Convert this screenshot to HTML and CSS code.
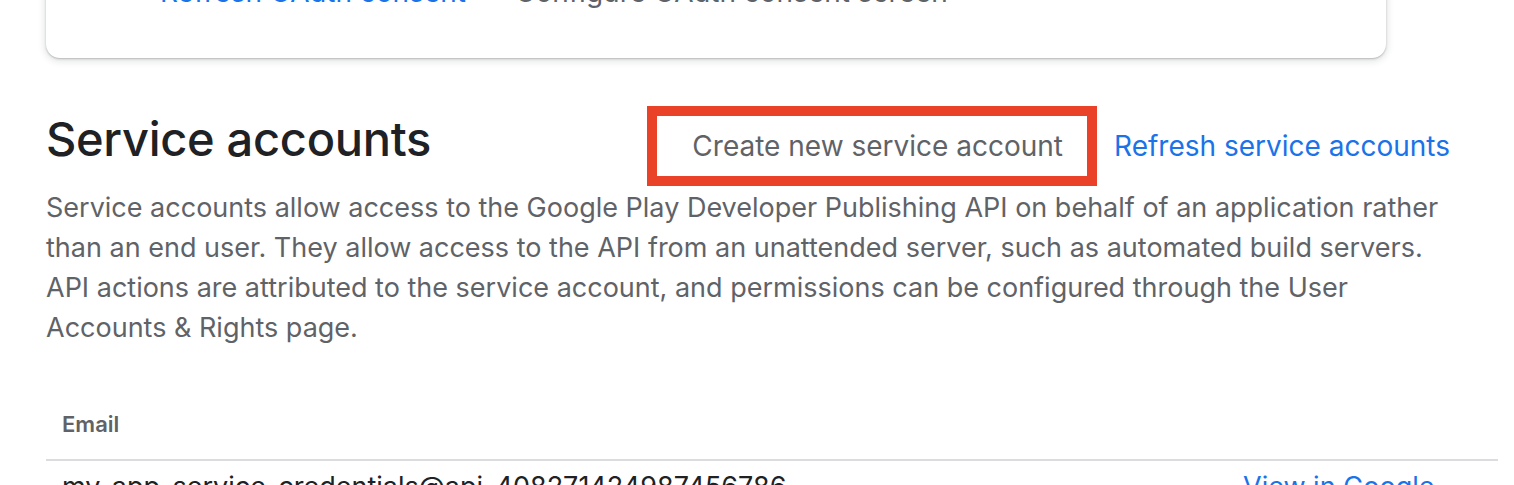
FILE: index.html
```html
<!DOCTYPE html>
<html lang="en">
<head>
<meta charset="utf-8">
<title>Service accounts</title>
<link rel="stylesheet" href="styles.css">
</head>
<body>
<div class="page">
  <div class="card">
    <div class="card-actions">
      <a class="link-btn" href="#">Refresh OAuth consent</a>
      <a class="text-btn" href="#">Configure OAuth consent screen</a>
    </div>
  </div>

  <section class="section">
    <div class="section-header">
      <h2 class="section-title">Service accounts</h2>
      <div class="section-actions">
        <button class="text-btn highlighted">Create new service account</button>
        <button class="link-btn">Refresh service accounts</button>
      </div>
    </div>
    <p class="section-desc">Service accounts allow access to the Google Play Developer Publishing API on behalf of an application rather than an end user. They allow access to the API from an unattended server, such as automated build servers. API actions are attributed to the service account, and permissions can be configured through the User Accounts &amp; Rights page.</p>

    <div class="table">
      <div class="table-head">
        <div class="th">Email</div>
      </div>
      <div class="table-row">
        <div class="td">my-app-service-credentials@api-408271424987456786 .iam.gserviceaccount.com</div>
        <a class="td-link" href="#">View in Google Cloud Platform</a>
      </div>
    </div>
  </section>
</div>
</body>
</html>
```

FILE: styles.css
```css
* { box-sizing: border-box; }
html, body { margin: 0; padding: 0; background: #fff; }
body {
  font-family: Inter, Roboto, "Liberation Sans", Arial, sans-serif;
  color: #5f6368;
  overflow: hidden;
}
.page {
  margin-top: -28px;
  padding: 0 16px 0 46px;
}
.card {
  width: 1340px;
  background: #fff;
  border-radius: 0 0 14px 14px;
  box-shadow: 0 1px 2px rgba(60,64,67,0.3), 0 2px 6px 2px rgba(60,64,67,0.12);
  padding: 0 0 46px 98px;
}
.card-actions {
  display: flex;
  gap: 17px;
  font-size: 28px;
  line-height: 40px;
}
.card-actions a { text-decoration: none; padding: 0 16px; }
.link-btn { color: #1a73e8; }
.text-btn { color: #5f6368; }

.section { padding-top: 47px; }
.section-header {
  display: flex;
  align-items: flex-start;
  justify-content: space-between;
  padding-right: 32px;
}
.section-title {
  margin: 6px 0 0;
  font-weight: 500;
  font-size: 47px;
  line-height: 56px;
  color: #202124;
  letter-spacing: -0.3px;
}
.section-actions { display: flex; align-items: center; margin-top: 1px; }
.section-actions button {
  font-family: Inter, Roboto, "Liberation Sans", sans-serif;
  font-size: 28px;
  line-height: 40px;
  background: none;
  border: 0;
  cursor: pointer;
}
.section-actions .highlighted {
  border: 10px solid #ea4129;
  padding: 10px 24px 10px 35px;
  height: 80px;
}
.section-actions .link-btn { padding: 0 16px 0 17px; }
.section-desc {
  margin: 2px 0 0;
  font-size: 27px;
  line-height: 40px;
  color: #5f6368;
  max-width: 1410px;
}
.table { margin-top: 40px; }
.table-head {
  height: 73px;
  display: flex;
  align-items: center;
  padding-left: 16px;
  border-bottom: 2px solid #dadce0;
}
.th { font-size: 22px; font-weight: 600; color: #5f6368; }
.table-row {
  display: flex;
  justify-content: space-between;
  padding: 6px 0 0 16px;
  font-size: 27px;
  line-height: 40px;
  color: #202124;
}
.td { width: 760px; word-break: break-word; }
.td-link { width: 255px; color: #1a73e8; text-decoration: none; }
```
